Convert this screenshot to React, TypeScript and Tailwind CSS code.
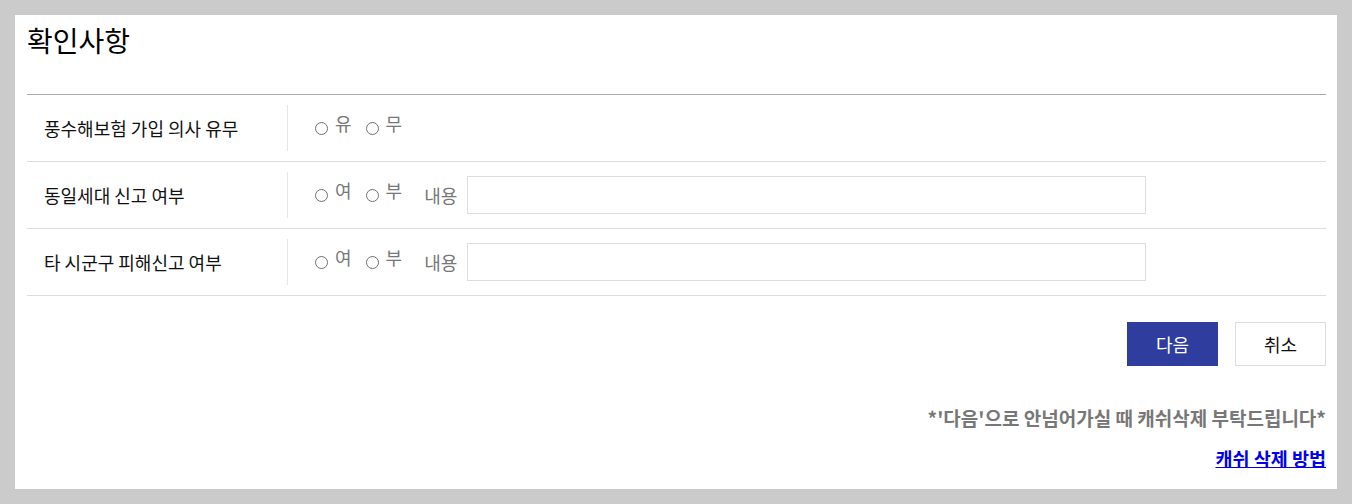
import React from "react";

const font = { fontFamily: '"Malgun Gothic", "Noto Sans CJK KR", "Noto Sans", sans-serif' };

function Radio({ label }: { label: string }) {
  return (
    <span className="flex items-center mr-[14px]">
      <span className="inline-block w-[13px] h-[13px] rounded-full border border-[#6f6f6f] mr-[7px]" />
      <span className="text-[18px] text-[#777] leading-none -translate-y-[5px]">{label}</span>
    </span>
  );
}

function Row({ label, options, withInput }: { label: string; options: string[]; withInput?: boolean }) {
  return (
    <div className="flex items-stretch h-[67px] border-b border-[#dddddd] py-[10px]">
      <div className="w-[261px] flex items-center border-r border-[#e6e6e6] pl-[17px] text-[18px] text-[#111]">
        {label}
      </div>
      <div className="flex items-center pl-[27px]">
        {options.map((o) => (
          <Radio key={o} label={o} />
        ))}
        {withInput && (
          <>
            <span className="text-[18px] text-[#777] ml-[8px] mr-[10px]">내용</span>
            <input className="w-[679px] h-[38px] border border-[#dddddd] outline-none" />
          </>
        )}
      </div>
    </div>
  );
}

export default function App() {
  return (
    <div className="bg-[#cbcbcb] w-[1352px] h-[504px] p-[15px]" style={font}>
      <div className="bg-white h-[474px] pl-[12px] pr-[11px]">
        <div className="h-[79px] pt-[6px] text-[28px] text-black leading-[38px]">확인사항</div>
        <div className="border-t border-[#aaaaaa]">
          <Row label="풍수해보험 가입 의사 유무" options={["유", "무"]} />
          <Row label="동일세대 신고 여부" options={["여", "부"]} withInput />
          <Row label="타 시군구 피해신고 여부" options={["여", "부"]} withInput />
        </div>
        <div className="flex justify-end gap-[17px] mt-[26px]">
          <button className="w-[91px] h-[44px] bg-[#2e3d9e] text-white text-[18px]">다음</button>
          <button className="w-[91px] h-[44px] bg-white border border-[#dddddd] text-[#111] text-[18px]">취소</button>
        </div>
        <div className="text-right mt-[39px] text-[19px] font-bold text-[#777] leading-[26px]">
          *'다음'으로 안넘어가실 때 캐쉬삭제 부탁드립니다*
        </div>
        <div className="text-right mt-[14px] text-[18.5px] font-bold leading-[26px]">
          <a href="#" className="text-[#0000ee] underline">캐쉬 삭제 방법</a>
        </div>
      </div>
    </div>
  );
}
